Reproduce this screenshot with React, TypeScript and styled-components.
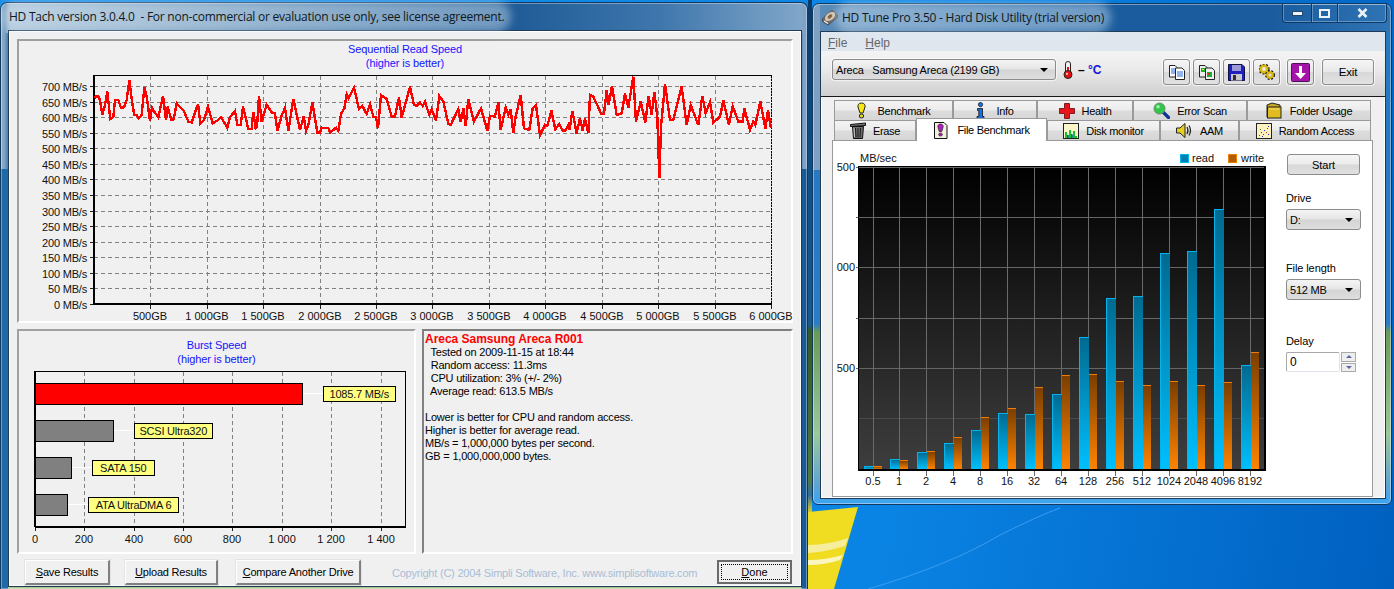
import styled, { createGlobalStyle } from 'styled-components';

const GlobalStyle = createGlobalStyle`
  html, body { margin: 0; padding: 0; background: #0a6fd0; }
  * { box-sizing: border-box; }
  body { font-family: "Liberation Sans", Arial, sans-serif; font-size: 11px; color: #000; }
`;

// digitised from the reference at 3x, so x and y are divided by 3 when drawn
const firstTrace = [
  283,295, 290,288, 296,290, 300,300, 307,345, 315,315, 322,275, 331,357, 340,350, 345,300, 355,300, 363,323, 372,322,
  380,300, 388,240, 396,305, 403,345, 410,345, 416,355, 425,345, 433,262, 440,290, 450,362, 456,323, 465,338, 475,352,
  489,288, 498,360, 503,320, 514,360, 521,358, 530,310, 540,322, 550,330, 565,365, 575,367, 594,312, 601,370, 612,360,
  624,320, 638,370, 650,363, 664,352, 682,384, 690,352, 705,333, 712,375, 722,375, 729,320, 745,387, 755,387, 760,336,
  767,385, 771,380, 777,288, 785,365, 800,314, 815,337, 825,340, 832,393, 845,347, 855,323, 865,392, 880,297, 900,390,
  911,350, 918,392, 925,375, 937,308, 952,398, 960,398, 965,383, 985,385, 991,398, 1008,383, 1015,392, 1023,342,
  1033,325, 1040,283, 1046,295, 1062,263, 1077,327, 1087,318, 1100,342, 1110,312, 1120,350, 1128,352, 1134,385,
  1143,285, 1160,297, 1175,350, 1185,350, 1197,292,
];
const secondTrace = [
  5,353, 30,260, 42,315, 50,318, 60,308, 68,318, 75,305, 88,345, 95,327, 108,362, 118,288, 130,305, 145,372, 152,375,
  175,327, 182,365, 190,326, 197,378, 205,297, 222,365, 243,325, 262,392, 270,347, 285,350, 295,306, 302,390, 317,323,
  325,345, 332,328, 340,400, 347,350, 362,285, 372,385, 388,390, 398,325, 408,315, 420,405, 435,375, 442,378, 454,332,
  466,388, 478,372, 488,392, 496,392, 505,375, 509,390, 517,333, 530,400, 540,355, 548,392, 555,355, 565,400, 570,285,
  580,290, 604,342, 612,342, 620,270, 626,315, 636,258, 650,345, 665,340, 675,280, 685,322, 700,230, 708,365, 722,305,
  736,367, 746,288, 755,345, 763,275, 772,350, 778,535, 783,380, 795,252, 810,360, 820,360, 845,260, 860,375, 872,315,
  895,375, 907,288, 917,340, 930,307, 940,368, 960,350, 970,302, 987,375, 998,318, 1015,365, 1028,365, 1033,325,
  1050,390, 1060,365, 1066,375, 1081,305, 1096,385, 1104,330, 1113,385,
];

const tracePoints = () => {
  const pts: string[] = [];
  for (let i = 0; i < firstTrace.length; i += 2) pts.push(`${firstTrace[i] / 3},${firstTrace[i + 1] / 3}`);
  for (let i = 0; i < secondTrace.length; i += 2) pts.push(`${400 + secondTrace[i] / 3},${secondTrace[i + 1] / 3}`);
  return pts.join(' ');
};

const speedXs = [150, 207, 263, 320, 376, 432, 489, 545, 602, 658, 715, 771];
const speedXLabels = ['500GB', '1 000GB', '1 500GB', '2 000GB', '2 500GB', '3 000GB', '3 500GB', '4 000GB', '4 500GB', '5 000GB', '5 500GB', '6 000GB'];
const speedYLabels = Array.from({ length: 15 }, (_, i) => 700 - i * 50);

const burstXs = [35, 84, 134, 183, 232, 282, 331, 381];
const burstXLabels = ['0', '200', '400', '600', '800', '1 000', '1 200', '1 400'];
const burstBars = [
  { end: 302.5, top: 383, fill: '#ff0000', text: '1085.7 MB/s', lx: 323.5, lw: 71.5 },
  { end: 113.5, top: 420, fill: '#808080', text: 'SCSI Ultra320', lx: 134.5, lw: 77.5 },
  { end: 71.5, top: 457, fill: '#808080', text: 'SATA 150', lx: 92.5, lw: 61.5 },
  { end: 67.5, top: 494, fill: '#808080', text: 'ATA UltraDMA 6', lx: 88.5, lw: 90 },
];

const fileSizes = ['0.5', '1', '2', '4', '8', '16', '32', '64', '128', '256', '512', '1024', '2048', '4096', '8192'];
const readTops = [466, 459, 452, 443, 430, 413, 414, 394, 337, 298, 296, 253, 251, 209, 365];
const writeTops = [466, 460, 451, 437, 417, 408, 387, 375, 374, 381, 385, 381, 385, 382, 352];
const fileXs = fileSizes.map((_, i) => Math.round(872.5 + i * 26.98));

const Desktop = styled.div`
  position: relative;
  width: 1394px;
  height: 589px;
  overflow: hidden;
  display: flex;
  align-items: flex-start;
  background:
    linear-gradient(180deg, #0b3b6b 0, #0f4f86 168px, #17588f 325px, #2f5a26 330px, #4f7a40 480px, #2f6f9f 495px, #c9c42a 510px, #e8d820 589px) 808px 0 / 4px 100% no-repeat,
    linear-gradient(100deg, #1a90ea 0, #0a84e4 65%, #0060c0 100%);
`;

const Wallpaper = styled.svg`
  position: absolute;
  left: 0;
  top: 0;
`;

const TachWindow = styled.div`
  position: relative;
  width: 808px;
  height: 587px;
  margin-top: 2px;
  flex: none;
  border: 1px solid #12395f;
  border-bottom: 0;
  border-radius: 7px 7px 0 0;
  box-shadow: inset 0 0 0 1px rgba(255, 255, 255, 0.35);
  background:
    linear-gradient(90deg, #93b1cb 0, #7b9fc0 4px, transparent 9px, transparent 800px, #7fa2c6 802px, #7fa2c6 100%) 0 0 / 100% 166px no-repeat,
    linear-gradient(90deg, #a7c0d6 0, #87a8c6 120px, #1f5b96 510px, #3f77ad 660px, #83a8ca 806px) 0 0 / 100% 30px no-repeat,
    linear-gradient(90deg, #1e6aa8 0, #1e6aa8 7px, transparent 7px, transparent 800px, #1a5a96 801px) 0 0 / 100% 100% no-repeat,
    linear-gradient(180deg, #1e5f9d 0, #1e5f9d 166px, #1f6fad 320px, #4a8c90 330px, #8fb89a 430px, #8ec4e0 490px, #6fb7e6 540px, #b4c98a 589px);
`;

const WindowTitle = styled.div`
  height: 27px;
  display: flex;
  align-items: center;
  padding-left: 8px;
`;

const TitleText = styled.span<{ $ml?: number }>`
  margin-left: ${(p) => p.$ml ?? 0}px;
  font-family: "Open Sans", "Noto Sans", sans-serif;
  font-size: 12px;
  letter-spacing: -0.24px;
  color: #101820;
  white-space: pre;
  border-radius: 10px;
  background: rgba(225, 238, 248, 0.42);
  box-shadow: 0 0 9px 7px rgba(225, 238, 248, 0.42);
`;

const TachClient = styled.div`
  height: 557px;
  margin: 0 5px 0 7px;
  padding: 8px 8px 0;
  background: #f0f0f0;
  border: 1px solid #1f3a55;
  box-shadow: inset 0 0 0 1px #fff;
`;

const ChartPanel = styled.section<{ $w: number; $h: number }>`
  width: ${(p) => p.$w}px;
  height: ${(p) => p.$h}px;
  flex: none;
  background: #f0f0f0;
  border-style: solid;
  border-width: 2px;
  border-color: #a0a0a0 #fff #fff #a0a0a0;
`;

const PanelTitle = styled.div<{ $pad: number }>`
  padding-top: ${(p) => p.$pad}px;
  text-align: center;
  color: #1414ff;
  font-size: 11px;
  line-height: 14px;
  letter-spacing: -0.1px;
`;

const BottomRow = styled.div`
  display: flex;
  gap: 6px;
  margin-top: 6px;
`;

const InfoPanel = styled.section`
  flex: none;
  width: 371px;
  height: 225px;
  padding: 2px 0 0 1px;
  background: #f0f0f0;
  border-style: solid;
  border-width: 2px;
  border-color: #808080 #fff #fff #808080;
  font-size: 11px;
  line-height: 13px;
  letter-spacing: -0.2px;
  white-space: pre;
`;

const InfoHead = styled.div`
  color: #ff0000;
  font-weight: 700;
  font-size: 12px;
  letter-spacing: -0.03px;
`;

const ActionBar = styled.div`
  display: flex;
  align-items: flex-start;
  margin-top: 6px;
  padding-left: 8px;
`;

const RaisedButton = styled.div<{ $w: number; $after: number }>`
  width: ${(p) => p.$w}px;
  height: 25px;
  margin-right: ${(p) => p.$after}px;
  flex: none;
  display: flex;
  align-items: center;
  justify-content: center;
  font-size: 11px;
  letter-spacing: -0.2px;
  background: #f0f0f0;
  border-style: solid;
  border-width: 1px 2px 2px 1px;
  border-color: #fff #808080 #808080 #fff;
  box-shadow: 0 0 0 1px #e4e4e4;
  u { text-decoration: underline; }
`;

const Copyright = styled.span`
  flex: none;
  width: 325px;
  padding-top: 7px;
  font-size: 11px;
  letter-spacing: -0.22px;
  color: #a8bdd6;
  white-space: pre;
`;

const DoneButton = styled.div`
  flex: none;
  width: 75px;
  height: 24px;
  padding: 2px;
  border: 2px solid #6a6a6a;
  background: #f0f0f0;
  font-size: 11px;
  u { text-decoration: underline; }
`;

const DoneFocus = styled.div`
  height: 100%;
  display: flex;
  align-items: center;
  justify-content: center;
  border: 1px dotted #000;
`;

const ChartSvg = styled.svg`
  display: block;
  overflow: visible;
  text {
    font-family: "Liberation Sans", Arial, sans-serif;
    font-size: 11px;
    fill: #111;
  }
  .axis-tight {
    letter-spacing: -0.2px;
  }
`;

const TuneWindow = styled.div`
  position: relative;
  flex: none;
  width: 580px;
  height: 502px;
  margin: 3px 0 0 4px;
  border: 1px solid #12395f;
  border-radius: 7px 7px 6px 6px;
  box-shadow: inset 0 0 0 1px rgba(255, 255, 255, 0.4);
  background:
    linear-gradient(90deg, #7fa0c0 0, #7fa0c0 7px, transparent 7px) 0 0 / 100% 166px no-repeat,
    linear-gradient(90deg, #5d8cb8 0, #2b6aa8 200px, #1a5c9e 300px, #1a5c9e 460px, #2f74b4 100%) 0 0 / 100% 28px no-repeat,
    linear-gradient(180deg, #2478c0 0, #2a7cc4 320px, #6a9a58 328px, #9cc89a 430px, #5fa5d0 480px, #3ea4f0 498px);
`;

const TuneTitle = styled.div`
  height: 27px;
  display: flex;
  align-items: center;
  padding-left: 9px;
`;

const CaptionGroup = styled.div`
  margin-left: auto;
  margin-right: 4px;
  align-self: flex-start;
  display: flex;
  height: 19px;
  border: 1px solid #0d3a68;
  border-top: 0;
  border-radius: 0 0 4px 4px;
  box-shadow: inset 0 0 0 1px rgba(170, 200, 230, 0.45);
`;

const CaptionButton = styled.div<{ $w: number; $last?: boolean }>`
  width: ${(p) => p.$w}px;
  display: flex;
  align-items: center;
  justify-content: center;
  border-right: ${(p) => (p.$last ? 0 : '1px solid #0d3a68')};
  box-shadow: ${(p) => (p.$last ? 'none' : '1px 0 0 rgba(170, 200, 230, 0.45)')};
`;

const TuneClient = styled.div`
  width: 566px;
  height: 468px;
  margin-left: 7px;
  background: #f0f0f0;
  border: 1px solid #1f3a55;
  box-shadow: inset 0 0 0 1px rgba(255, 255, 255, 0.9);
`;

const MenuBar = styled.div`
  height: 19px;
  display: flex;
  align-items: center;
  gap: 18px;
  padding: 2px 0 0 7px;
  background: #dfe6ee;
  color: #666;
  font-size: 12px;
  u { text-decoration: underline; }
`;

const Toolbar = styled.div`
  height: 46px;
  display: flex;
  align-items: flex-start;
  padding: 8px 0 0 11px;
  background: linear-gradient(180deg, #f3f3f3 0, #eaeaea 40%, #cfcfcf 100%);
  border-bottom: 1px solid #1a1a1a;
`;

const ComboBox = styled.div<{ $w: number; $h: number }>`
  width: ${(p) => p.$w}px;
  height: ${(p) => p.$h}px;
  flex: none;
  display: flex;
  align-items: center;
  justify-content: space-between;
  padding: 0 7px 0 3px;
  border: 1px solid #8c8c8c;
  border-radius: 3px;
  background: linear-gradient(180deg, #f4f4f4 0, #e6e6e6 48%, #d4d4d4 52%, #dedede 100%);
  font-size: 11px;
  letter-spacing: -0.2px;
  white-space: pre;
  box-shadow: 0 0 0 1px rgba(255, 255, 255, 0.6);
`;

const ComboArrow = styled.span`
  width: 0;
  height: 0;
  border-left: 4px solid transparent;
  border-right: 4px solid transparent;
  border-top: 4px solid #000;
`;

const Temperature = styled.div`
  display: flex;
  align-items: center;
  gap: 5px;
  margin: 2px 0 0 7px;
  width: 100px;
  flex: none;
  height: 18px;
  font-size: 12px;
  font-weight: 700;
  white-space: pre;
  span { color: #1414d8; }
`;

const ToolButton = styled.div<{ $after?: number }>`
  width: 27px;
  height: 26px;
  margin-right: ${(p) => p.$after ?? 3}px;
  flex: none;
  display: flex;
  align-items: center;
  justify-content: center;
  border: 1px solid #8c8c8c;
  border-radius: 3px;
  background: linear-gradient(180deg, #f6f6f6 0, #e8e8e8 48%, #d8d8d8 52%, #e2e2e2 100%);
  box-shadow: 0 0 0 1px rgba(255, 255, 255, 0.7);
`;

const ExitButton = styled(ToolButton)`
  width: 52px;
  font-size: 11.5px;
  letter-spacing: -0.2px;
`;

const TabRows = styled.div`
  margin: 3px 0 0 13px;
  width: 537px;
`;

const TabRow = styled.div`
  display: flex;
  height: 20px;
`;

const Tab = styled.div<{ $w: number; $gap: number; $active?: boolean }>`
  position: relative;
  width: ${(p) => p.$w}px;
  flex: none;
  display: flex;
  align-items: center;
  justify-content: center;
  gap: ${(p) => p.$gap}px;
  font-size: 11px;
  letter-spacing: -0.3px;
  border: 1px solid #9a9a9a;
  border-bottom: 0;
  background: linear-gradient(180deg, #f4f4f4 0, #ececec 45%, #dcdcdc 55%, #d6d6d6 100%);
  ${(p) =>
    p.$active &&
    `
    z-index: 2;
    height: 23px;
    margin-top: -2px;
    margin-bottom: -1px;
    background: #fff;
  `}
`;

const TabPanel = styled.div`
  display: flex;
  width: 541px;
  height: 357px;
  margin-left: 11px;
  background: #fff;
  border: 1px solid #9a9a9a;
`;

const Controls = styled.div`
  margin-left: 8px;
  width: 76px;
  flex: none;
  display: flex;
  flex-direction: column;
  padding-top: 13px;
`;

const StartButton = styled.div`
  width: 73px;
  height: 21px;
  margin-left: 1px;
  display: flex;
  align-items: center;
  justify-content: center;
  border: 1px solid #8c8c8c;
  border-radius: 3px;
  font-size: 11px;
  background: linear-gradient(180deg, #f6f6f6 0, #ebebeb 48%, #d8d8d8 52%, #e0e0e0 100%);
`;

const FieldLabel = styled.label<{ $top: number }>`
  display: block;
  margin-top: ${(p) => p.$top}px;
  margin-bottom: 4px;
  height: 14px;
  line-height: 14px;
  font-size: 11px;
  letter-spacing: -0.1px;
`;

const SpinRow = styled.div`
  display: flex;
  gap: 1px;
  height: 20px;
`;

const SpinInput = styled.div`
  width: 54px;
  padding-left: 3px;
  display: flex;
  align-items: center;
  font-size: 12px;
  border: 1px solid #a8a8a8;
  border-right-color: #dfe3ec;
  border-bottom-color: #dfe3ec;
  border-radius: 2px;
`;

const SpinButtons = styled.div`
  width: 15px;
  display: flex;
  flex-direction: column;
  gap: 1px;
`;

const SpinButton = styled.div<{ $up?: boolean }>`
  flex: 1;
  display: flex;
  align-items: center;
  justify-content: center;
  border: 1px solid #aaa;
  background: #eee;
  &::after {
    content: '';
    width: 0;
    height: 0;
    border-left: 3px solid transparent;
    border-right: 3px solid transparent;
    ${(p) => (p.$up ? 'border-bottom: 3px solid #5a68a8;' : 'border-top: 3px solid #5a68a8;')}
  }
`;

const Icon = styled.svg`
  display: block;
  flex: none;
`;

const DiskIcon = () => (
  <Icon width="16" height="17" viewBox="0 0 16 17">
    <path d="M0.5 10 L10 1.5 L15.5 6 L15.5 8.5 L6 16 L0.5 12.5 Z" fill="#6a6a6a" stroke="#3a3a3a" strokeWidth="0.7" />
    <ellipse cx="8" cy="7.5" rx="6.4" ry="4" transform="rotate(-38 8 7.5)" fill="#cfc4b2" stroke="#5a4a3a" strokeWidth="0.6" />
    <ellipse cx="8" cy="7.5" rx="2.6" ry="1.6" transform="rotate(-38 8 7.5)" fill="#7a5a3c" />
    <path d="M2 12 L6 14.5" stroke="#f4f4f4" strokeWidth="1.2" />
  </Icon>
);

const BulbIcon = () => (
  <Icon width="9" height="17" viewBox="0 0 9 17">
    <path d="M4.5 1 C7.5 1 8.3 3 8 5 L6 11 L3 11 L1 5 C0.7 3 1.5 1 4.5 1 Z" fill="#f4e810" stroke="#222" />
    <ellipse cx="4.5" cy="14" rx="2.2" ry="2" fill="#e8d810" stroke="#222" />
  </Icon>
);

const InfoIcon = () => (
  <Icon width="9" height="17" viewBox="0 0 9 17">
    <circle cx="4.5" cy="2.6" r="2.1" fill="#1878f0" stroke="#111" strokeWidth="0.8" />
    <path d="M1.5 6.5 H6.5 V14.5 H8 V16.5 H1 V14.5 H2.8 V8.5 H1.5 Z" fill="#1070e8" stroke="#111" strokeWidth="0.8" />
  </Icon>
);

const PlusIcon = () => (
  <Icon width="16" height="16" viewBox="0 0 16 16">
    <path d="M5.5 0.5 H10.5 V5.5 H15.5 V10.5 H10.5 V15.5 H5.5 V10.5 H0.5 V5.5 H5.5 Z" fill="#e8141c" stroke="#7a2020" />
  </Icon>
);

const LensIcon = () => (
  <Icon width="17" height="17" viewBox="0 0 17 17">
    <path d="M10 10 L15.5 15.5" stroke="#10309a" strokeWidth="3.2" strokeLinecap="round" />
    <circle cx="6.5" cy="6.5" r="5.5" fill="#30c848" stroke="#6a8a6a" />
    <circle cx="5" cy="4.8" r="1.8" fill="#a8f0b0" />
  </Icon>
);

const FolderIcon = () => (
  <Icon width="16" height="17" viewBox="0 0 16 17">
    <path d="M1 3 L6 1 L14 3 V15 L1 15 Z" fill="#c8a820" stroke="#222" />
    <rect x="1.5" y="5" width="13.5" height="11" fill="#e0bc20" stroke="#222" />
    <path d="M3 7 H13" stroke="#f4e070" />
  </Icon>
);

const TrashIcon = () => (
  <Icon width="16" height="17" viewBox="0 0 16 17">
    <path d="M0.5 2.5 L15.5 1 V3.5 L0.5 4.5 Z" fill="#777" stroke="#111" />
    <path d="M2.5 4.5 H13.5 L12.5 16.5 H3.5 Z" fill="#6e6e6e" stroke="#111" />
    <path d="M5.5 6 L6 15.5 M8 6 V15.5 M10.5 6 L10 15.5" stroke="#1a1a1a" />
    <path d="M4 6 L4.5 15" stroke="#c8c8c8" />
  </Icon>
);

const SheetIcon = () => (
  <Icon width="15" height="17" viewBox="0 0 15 17">
    <path d="M1.5 0.5 H11 L14 3.5 V16.5 H1.5 Z" fill="#f4f0e0" stroke="#111" />
    <path d="M7.5 2 C10 2 10.5 4 10 5.5 L8.8 9.5 H6.2 L5 5.5 C4.5 4 5 2 7.5 2 Z" fill="#b020c0" stroke="#222" strokeWidth="0.7" />
    <ellipse cx="7.5" cy="12.5" rx="1.8" ry="1.6" fill="#b020c0" stroke="#222" strokeWidth="0.7" />
  </Icon>
);

const MonitorIcon = () => (
  <Icon width="16" height="16" viewBox="0 0 16 16">
    <rect x="0.5" y="0.5" width="15" height="15" fill="#fbf7c8" stroke="#222" />
    <path d="M2 15 V9 H4 V12 H6 V7 H8 V12 H10 V8 H12 V13 H14 V15 Z" fill="#18c030" />
    <path d="M4 15 V12 H5.5 V15 M8 15 V11 H9.5 V15" fill="#1858e0" />
  </Icon>
);

const SpeakerIcon = () => (
  <Icon width="17" height="15" viewBox="0 0 17 15">
    <path d="M0.5 5 H4 L9 0.5 V14.5 L4 10 H0.5 Z" fill="#e8d020" stroke="#222" />
    <path d="M11 4 Q13 7.5 11 11 M13 2.5 Q16 7.5 13 12.5" stroke="#222" strokeWidth="1.2" fill="none" />
  </Icon>
);

const RandomIcon = () => (
  <Icon width="16" height="16" viewBox="0 0 16 16">
    <rect x="0.5" y="0.5" width="15" height="15" fill="#fbf2c0" stroke="#222" />
    {[[3, 12, '#e01818'], [5, 9, '#1830d0'], [7, 11, '#e01818'], [8, 7, '#1830d0'], [10, 9, '#e01818'], [11, 5, '#e01818'], [12, 11, '#1830d0'], [4, 6, '#2a9a30'], [12, 3, '#1830d0'], [6, 13, '#1830d0']].map(([x, y, c], i) => (
      <rect key={i} x={x as number} y={y as number} width="1" height="1" fill={c as string} />
    ))}
  </Icon>
);

const ThermoIcon = () => (
  <Icon width="10" height="18" viewBox="0 0 10 18">
    <rect x="2.5" y="0.5" width="5" height="13" rx="2.4" fill="#f0f0f0" stroke="#222" />
    <rect x="4" y="6" width="2" height="7" fill="#e01010" />
    <circle cx="5" cy="13.5" r="4" fill="#e01010" stroke="#222" />
    <circle cx="4" cy="12.8" r="1.1" fill="#fbc8c8" />
  </Icon>
);

const CopyIcon = () => (
  <Icon width="16" height="15" viewBox="0 0 16 15">
    <path d="M0.5 0.5 H6 L8 2.5 V12 H0.5 Z" fill="#fff" stroke="#222" />
    <path d="M6.5 3 H13 L15.5 5.5 V14.5 H6.5 Z" fill="#fff" stroke="#222" />
    <path d="M2 4 H6 M2 6 H6 M2 8 H6 M8 7 H14 M8 9 H14 M8 11 H14" stroke="#2068e0" />
  </Icon>
);

const CopyImageIcon = () => (
  <Icon width="16" height="15" viewBox="0 0 16 15">
    <path d="M0.5 0.5 H6 L8 2.5 V12 H0.5 Z" fill="#eee" stroke="#222" />
    <path d="M6.5 3 H13 L15.5 5.5 V14.5 H6.5 Z" fill="#eee" stroke="#222" />
    <rect x="2" y="3" width="4" height="4" fill="#18b030" />
    <rect x="3" y="4" width="2" height="1" fill="#f0e020" />
    <rect x="8" y="7" width="5" height="5" fill="#18b030" />
    <rect x="9" y="8" width="2" height="2" fill="#f02020" />
  </Icon>
);

const FloppyIcon = () => (
  <Icon width="17" height="17" viewBox="0 0 17 17">
    <path d="M0.5 0.5 H14 L16.5 3 V16.5 H0.5 Z" fill="#2020c0" stroke="#101040" />
    <rect x="4" y="1" width="9" height="6" fill="#9a9ad8" />
    <rect x="3" y="10" width="11" height="6.5" fill="#c8c8c8" />
    <rect x="5" y="11" width="3" height="5" fill="#303030" />
  </Icon>
);

const GearsIcon = () => (
  <Icon width="16" height="16" viewBox="0 0 16 16">
    <circle cx="5" cy="5" r="3.4" fill="none" stroke="#d8b810" strokeWidth="2.8" />
    <circle cx="5" cy="5" r="5" fill="none" stroke="#111" strokeWidth="1.1" strokeDasharray="2 1.6" />
    <circle cx="11" cy="11" r="2.8" fill="none" stroke="#d8b810" strokeWidth="2.6" />
    <circle cx="11" cy="11" r="4.4" fill="none" stroke="#111" strokeWidth="1.1" strokeDasharray="2 1.6" />
  </Icon>
);

const ArrowIcon = () => (
  <Icon width="19" height="19" viewBox="0 0 19 19">
    <rect x="0.5" y="0.5" width="18" height="18" rx="1" fill="#a414a8" stroke="#50105a" />
    <path d="M8 3 H11 V10 H15 L9.5 16 L4 10 H8 Z" fill="#fff" />
  </Icon>
);

const MinGlyph = () => (
  <Icon width="11" height="5" viewBox="0 0 11 5">
    <rect x="0.5" y="0.5" width="10" height="4" fill="#f0f4f8" stroke="#24486f" />
  </Icon>
);

const MaxGlyph = () => (
  <Icon width="11" height="9" viewBox="0 0 11 9">
    <rect x="1" y="1" width="9" height="7" fill="none" stroke="#f0f4f8" strokeWidth="2" />
  </Icon>
);

const CloseGlyph = () => (
  <Icon width="11" height="10" viewBox="0 0 11 10">
    <path d="M1.5 1 L9.5 9 M9.5 1 L1.5 9" stroke="#eef2f6" strokeWidth="2.6" />
  </Icon>
);

const SpeedChart = () => (
  <ChartSvg width="772" height="251" viewBox="19 70 772 251">
    {speedYLabels.map((v, i) => {
      const y = Math.round(86 + i * 15.57) + 0.5;
      return (
        <g key={v}>
          {i < 14 && <line x1="94" x2="772" y1={y} y2={y} stroke="#808080" strokeDasharray="4 3" shapeRendering="crispEdges" />}
          <line x1="90" x2="95" y1={y} y2={y} stroke="#222" shapeRendering="crispEdges" />
          <text className="axis-tight" x="87" y={y + 4} textAnchor="end">{v} MB/s</text>
        </g>
      );
    })}
    {speedXs.map((x, i) => (
      <g key={x}>
        <line x1={x + 0.5} x2={x + 0.5} y1="76" y2="304" stroke="#808080" strokeDasharray="4 3" shapeRendering="crispEdges" />
        <line x1={x + 0.5} x2={x + 0.5} y1="304" y2="309" stroke="#222" shapeRendering="crispEdges" />
        <text x={x} y="320" textAnchor="middle">{speedXLabels[i]}</text>
      </g>
    ))}
    <line x1="94" x2="772" y1="75.5" y2="75.5" stroke="#000" shapeRendering="crispEdges" />
    <line x1="771.5" x2="771.5" y1="76" y2="304" stroke="#000" strokeDasharray="2 1" shapeRendering="crispEdges" />
    <line x1="94" x2="94" y1="75" y2="305" stroke="#000" strokeWidth="2" shapeRendering="crispEdges" />
    <line x1="94" x2="772" y1="303.5" y2="303.5" stroke="#000" strokeWidth="2" shapeRendering="crispEdges" />
    <polyline points={tracePoints()} fill="none" stroke="#ff0000" strokeWidth="2.4" shapeRendering="crispEdges" />
  </ChartSvg>
);

const BurstChart = () => (
  <ChartSvg width="395" height="186" viewBox="19 366 395 186">
    {burstXs.slice(1).map((x) => (
      <line key={x} x1={x + 0.5} x2={x + 0.5} y1="372" y2="526" stroke="#808080" strokeDasharray="4 3" shapeRendering="crispEdges" />
    ))}
    {burstXs.map((x, i) => (
      <g key={x}>
        <line x1={x + 0.5} x2={x + 0.5} y1="526" y2="531" stroke="#222" shapeRendering="crispEdges" />
        <text x={x} y="543" textAnchor="middle">{burstXLabels[i]}</text>
      </g>
    ))}
    <rect x="35.5" y="371.5" width="370" height="155" fill="none" stroke="#000" strokeWidth="1.5" shapeRendering="crispEdges" />
    <line x1="35" x2="35" y1="371" y2="527" stroke="#000" strokeWidth="2" shapeRendering="crispEdges" />
    <line x1="35" x2="406" y1="526.5" y2="526.5" stroke="#000" strokeWidth="2" shapeRendering="crispEdges" />
    {burstBars.map((b) => (
      <g key={b.text}>
        <line x1={b.end} x2={b.lx} y1={b.top + 10.5} y2={b.top + 10.5} stroke="#fff" shapeRendering="crispEdges" />
        <rect x="35.5" y={b.top + 0.5} width={b.end - 35.5} height="20.5" fill={b.fill} stroke="#000" shapeRendering="crispEdges" />
        <rect x={b.lx} y={b.top + 3.5} width={b.lw} height="15" fill="#ffff80" stroke="#000" shapeRendering="crispEdges" />
        <text className="axis-tight" x={b.lx + b.lw / 2} y={b.top + 15} textAnchor="middle">{b.text}</text>
      </g>
    ))}
  </ChartSvg>
);

const FileChart = () => (
  <ChartSvg width="445" height="355" viewBox="833 141 445 355">
    <defs>
      <linearGradient id="plotBg" x1="0" y1="0" x2="0" y2="1">
        <stop offset="0" stopColor="#000" />
        <stop offset="1" stopColor="#3e3e3e" />
      </linearGradient>
      <linearGradient id="readBar" x1="0" y1="0" x2="0" y2="1">
        <stop offset="0" stopColor="#006a90" />
        <stop offset="1" stopColor="#00c0ff" />
      </linearGradient>
      <linearGradient id="writeBar" x1="0" y1="0" x2="0" y2="1">
        <stop offset="0" stopColor="#7a3e00" />
        <stop offset="1" stopColor="#ff8400" />
      </linearGradient>
    </defs>
    <text x="860" y="162">MB/sec</text>
    <rect x="1180.5" y="154.5" width="8" height="8" fill="#0080b0" stroke="#00b8f0" />
    <text x="1192" y="162">read</text>
    <rect x="1228.5" y="154.5" width="8" height="8" fill="#b05c00" stroke="#f08000" />
    <text x="1241" y="162">write</text>
    <rect x="858" y="166" width="408" height="305" fill="url(#plotBg)" />
    {[167, 217, 267, 318, 368, 418].map((y) => (
      <line key={y} x1={y === 418 ? 859 : 856} x2="1266" y1={y + 0.5} y2={y + 0.5} stroke={y === 418 ? '#4a4a4a' : '#666'} shapeRendering="crispEdges" />
    ))}
    {fileXs.map((x) => (
      <line key={x} x1={x + 0.5} x2={x + 0.5} y1="167" y2="476" stroke="#6a6a6a" shapeRendering="crispEdges" />
    ))}
    {fileXs.map((x, i) => (
      <g key={x}>
        <rect x={x - 8.5} y={readTops[i] + 0.5} width="9" height={469 - readTops[i]} fill="url(#readBar)" shapeRendering="crispEdges" />
        <path d={`M${x - 8.5} 469 V${readTops[i] + 0.5} H${x + 0.5}`} fill="none" stroke="#00b4ee" shapeRendering="crispEdges" />
        <rect x={x + 0.5} y={writeTops[i] + 0.5} width="8" height={469 - writeTops[i]} fill="url(#writeBar)" shapeRendering="crispEdges" />
        <line x1={x + 0.5} x2={x + 8.5} y1={writeTops[i] + 0.5} y2={writeTops[i] + 0.5} stroke="#f07c00" shapeRendering="crispEdges" />
      </g>
    ))}
    <rect x="858" y="469" width="408" height="2" fill="#000" />
    <rect x="858" y="166" width="408" height="1" fill="#000" />
    <rect x="858" y="166" width="1" height="305" fill="#000" />
    <rect x="1264" y="166" width="2" height="305" fill="#000" />
    {fileXs.map((x) => (
      <line key={x} x1={x + 0.5} x2={x + 0.5} y1="471" y2="476" stroke="#6a6a6a" shapeRendering="crispEdges" />
    ))}
    <text x="855" y="171" textAnchor="end">500</text>
    <text x="855" y="271" textAnchor="end">000</text>
    <text x="855" y="372" textAnchor="end">500</text>
    {fileSizes.map((s, i) => (
      <text key={s} x={fileXs[i]} y="485" textAnchor="middle">{s}</text>
    ))}
  </ChartSvg>
);

export default function App() {
  return (
    <Desktop>
      <GlobalStyle />
      <Wallpaper width="1394" height="589" viewBox="0 0 1394 589">
        <path d="M808 512 L858 507 L834 589 L808 589 Z" fill="#f0dc20" />
        <path d="M808 545 Q828 545 848 538 L845 546 Q825 552 808 553 Z" fill="#f6ee9a" />
        <path d="M808 560 Q826 560 843 555 L840 560 Q825 565 808 565 Z" fill="#fbf5c0" />
        <path d="M868 589 Q950 565 1000 535 Q1040 515 1060 508" fill="none" stroke="#3a9cf0" strokeWidth="1" />
      </Wallpaper>
      <TachWindow>
        <WindowTitle>
          <TitleText>{'HD Tach version 3.0.4.0  - For non-commercial or evaluation use only, see license agreement.'}</TitleText>
        </WindowTitle>
        <TachClient>
          <ChartPanel $w={776} $h={284}>
            <PanelTitle $pad={1}>
              Sequential Read Speed
              <br />
              (higher is better)
            </PanelTitle>
            <SpeedChart />
          </ChartPanel>
          <BottomRow>
            <ChartPanel $w={399} $h={225}>
              <PanelTitle $pad={7}>
                Burst Speed
                <br />
                (higher is better)
              </PanelTitle>
              <BurstChart />
            </ChartPanel>
            <InfoPanel>
              <InfoHead>Areca Samsung Areca R001</InfoHead>
              {'  Tested on 2009-11-15 at 18:44\n  Random access: 11.3ms\n  CPU utilization: 3% (+/- 2%)\n  Average read: 613.5 MB/s\n\nLower is better for CPU and random access.\nHigher is better for average read.\nMB/s = 1,000,000 bytes per second.\nGB = 1,000,000,000 bytes.'}
            </InfoPanel>
          </BottomRow>
          <ActionBar>
            <RaisedButton $w={85} $after={15}><span><u>S</u>ave Results</span></RaisedButton>
            <RaisedButton $w={93} $after={18}><span><u>U</u>pload Results</span></RaisedButton>
            <RaisedButton $w={125} $after={31}><span><u>C</u>ompare Another Drive</span></RaisedButton>
            <Copyright>Copyright (C) 2004 Simpli Software, Inc. www.simplisoftware.com</Copyright>
            <DoneButton>
              <DoneFocus><span><u>D</u>one</span></DoneFocus>
            </DoneButton>
          </ActionBar>
        </TachClient>
      </TachWindow>
      <TuneWindow>
        <TuneTitle>
          <DiskIcon />
          <TitleText $ml={4}>HD Tune Pro 3.50 - Hard Disk Utility (trial version)</TitleText>
          <CaptionGroup>
            <CaptionButton $w={29}><MinGlyph /></CaptionButton>
            <CaptionButton $w={26}><MaxGlyph /></CaptionButton>
            <CaptionButton $w={48} $last><CloseGlyph /></CaptionButton>
          </CaptionGroup>
        </TuneTitle>
        <TuneClient>
          <MenuBar>
            <span><u>F</u>ile</span>
            <span><u>H</u>elp</span>
          </MenuBar>
          <Toolbar>
            <ComboBox $w={224} $h={21}>
              <span>{'Areca   Samsung Areca (2199 GB)'}</span>
              <ComboArrow />
            </ComboBox>
            <Temperature>
              <ThermoIcon />
              <div>– <span>°C</span></div>
            </Temperature>
            <ToolButton><CopyIcon /></ToolButton>
            <ToolButton><CopyImageIcon /></ToolButton>
            <ToolButton><FloppyIcon /></ToolButton>
            <ToolButton $after={7}><GearsIcon /></ToolButton>
            <ToolButton $after={8}><ArrowIcon /></ToolButton>
            <ExitButton>Exit</ExitButton>
          </Toolbar>
          <TabRows>
            <TabRow>
              <Tab $w={119} $gap={12}><BulbIcon />Benchmark</Tab>
              <Tab $w={84} $gap={11}><InfoIcon />Info</Tab>
              <Tab $w={96} $gap={7}><PlusIcon />Health</Tab>
              <Tab $w={114} $gap={7}><LensIcon />Error Scan</Tab>
              <Tab $w={124} $gap={8}><FolderIcon />Folder Usage</Tab>
            </TabRow>
            <TabRow>
              <Tab $w={82} $gap={7}><TrashIcon />Erase</Tab>
              <Tab $w={131} $gap={9} $active><SheetIcon />File Benchmark</Tab>
              <Tab $w={113} $gap={7}><MonitorIcon />Disk monitor</Tab>
              <Tab $w={79} $gap={7}><SpeakerIcon />AAM</Tab>
              <Tab $w={132} $gap={7}><RandomIcon />Random Access</Tab>
            </TabRow>
          </TabRows>
          <TabPanel>
            <FileChart />
            <Controls>
              <StartButton>Start</StartButton>
              <FieldLabel $top={16}>Drive</FieldLabel>
              <ComboBox $w={75} $h={21}><span>D:</span><ComboArrow /></ComboBox>
              <FieldLabel $top={31}>File length</FieldLabel>
              <ComboBox $w={75} $h={21}><span>512 MB</span><ComboArrow /></ComboBox>
              <FieldLabel $top={34}>Delay</FieldLabel>
              <SpinRow>
                <SpinInput>0</SpinInput>
                <SpinButtons>
                  <SpinButton $up />
                  <SpinButton />
                </SpinButtons>
              </SpinRow>
            </Controls>
          </TabPanel>
        </TuneClient>
      </TuneWindow>
    </Desktop>
  );
}
